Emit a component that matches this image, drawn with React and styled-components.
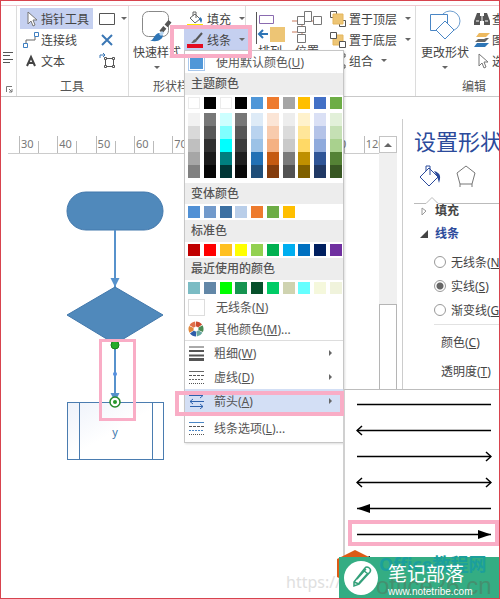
import React from "react";
import styled, { createGlobalStyle, css } from "styled-components";

const Global = createGlobalStyle`
  * { box-sizing: border-box; }
  body { margin: 0; background: #fff; }
  body, button, input { font-family: "Noto Sans", "Noto Sans CJK SC", sans-serif; font-size: 12px; color: #444; }
  button { border: 0; padding: 0; margin: 0; background: none; text-align: left; white-space: nowrap; }
  svg { display: block; flex: none; }
  u { text-underline-offset: 1px; }
`;

const BLUE = "#2b4a9b";
const PINK = "#f9adc6";

const Window = styled.main`
  position: relative;
  display: flex;
  flex-direction: column;
  min-height: 100vh;
  overflow: hidden;
  border: 1px solid #d8434e;
`;

/* Ribbon */
const Ribbon = styled.header`
  display: flex;
  height: 92px;
  margin-top: 4px;
  overflow: hidden;
  border-top: 1px solid #f1c9cf;
  border-bottom: 1px solid #c9c9c9;
`;
const Group = styled.section`
  display: flex;
  flex-direction: column;
  flex: none;
  width: ${(p) => p.$w}px;
  padding-top: 2px;
  border-right: 1px solid #dcdcdc;
`;
const GroupBody = styled.div`
  display: flex;
  height: 70px;
  padding-left: ${(p) => p.$pad || 0}px;
  gap: ${(p) => p.$gap || 0}px;
`;
const GroupLabel = styled.div`
  padding-left: ${(p) => p.$pad}px;
  line-height: 18px;
  white-space: nowrap;
  color: #555;
`;
const Column = styled.div`
  display: flex;
  flex-direction: column;
  flex: none;
`;
const Tool = styled.button`
  display: flex;
  align-items: center;
  gap: ${(p) => p.$gap || 2}px;
  height: 21px;
  padding: 0 4px 0 3px;
  ${(p) => p.$active && css`background: #c5d0f0;`}
`;
const BigTool = styled.button`
  display: flex;
  flex-direction: column;
  align-items: center;
  flex: none;
  width: ${(p) => p.$w}px;
  line-height: 18px;
  padding-top: 2px;
`;
const BigLabel = styled.span`
  margin-top: ${(p) => p.$gap}px;
`;
const Caret = styled.i`
  flex: none;
  margin: ${(p) => (p.$below ? "4px 0 0" : "0 0 0 5px")};
  border: 3px solid transparent;
  border-top-color: #666;
  border-bottom: 0;
`;
const Sliver = styled.div`
  display: flex;
  flex-direction: column;
  justify-content: space-between;
  flex: none;
  width: 16px;
  padding: 45px 3px 3px 2px;
  border-right: 1px solid #dcdcdc;
`;

/* Document area */
const Workspace = styled.div`
  display: flex;
  flex: 1;
  padding-top: 22px;
`;
const Canvas = styled.section`
  display: flex;
  flex-direction: column;
  flex: 1;
  min-width: 0;
  padding-top: 17px;
`;
const Ruler = styled.div`
  height: 18px;
  margin-left: 7px;
  padding-left: 11px;
  overflow: hidden;
  border-bottom: 1px solid #ccc;
`;
const Ticks = styled.div`
  display: grid;
  grid-template-columns: repeat(10, 1fr);
  width: 383px;
  height: 17px;
`;
const Tick = styled.span`
  padding-left: 1px;
  border-left: 1px solid #bbb;
  font-size: 11px;
  line-height: 15px;
  color: #777;
  background: linear-gradient(#bbb, #bbb) 18px 100% / 1px 12px no-repeat;
`;
const Scroll = styled.div`
  display: flex;
  flex-direction: column;
  flex: none;
  width: 18px;
  margin-top: 17px;
  margin-right: 5px;
  background: #f0f0f0;
`;
const ScrollButton = styled.button`
  display: grid;
  place-items: center;
  height: 17px;
  border: 1px solid #c4c4c4;
  background: #fff;
`;
const Up = styled.i`
  border: 4px solid transparent;
  border-bottom-color: #666;
  border-top: 0;
`;
const Thumb = styled.div`
  flex: 1;
  margin-top: 151px;
  border: 1px solid #b5b5b5;
  background: #fff;
`;

/* Format panel */
const Panel = styled.aside`
  flex: none;
  width: 97px;
  padding-left: 11px;
  overflow: hidden;
  white-space: nowrap;
  border-left: 1px solid #ccc;
`;
const PanelTitle = styled.h1`
  margin: 0;
  padding-top: 4px;
  font-size: 22px;
  line-height: 36px;
  font-weight: 400;
  color: ${BLUE};
`;
const PanelTabs = styled.div`
  display: flex;
  gap: 12px;
  height: 37px;
  padding: 5px 0 0 4px;
`;
const Section = styled.button`
  display: flex;
  align-items: center;
  gap: 7px;
  width: 100%;
  height: ${(p) => (p.$clipped ? 14 : 32)}px;
  padding-left: 6px;
  overflow: hidden;
  font-weight: 700;
  color: ${(p) => (p.$open ? BLUE : "#444")};
  line-height: 14px;
`;
const Options = styled.div`
  display: flex;
  flex-direction: column;
  margin: 0 0 2px 20px;
  padding-bottom: 2px;
  border-bottom: 1px solid #e2e2e2;
`;
const Option = styled.label`
  display: flex;
  align-items: center;
  gap: 5px;
  height: 24px;
`;
const Radio = styled.input`
  appearance: none;
  flex: none;
  width: 12px;
  height: 12px;
  margin: 0;
  border: 1px solid #999;
  border-radius: 50%;
  &:checked { background: radial-gradient(#666 0 3px, #fff 4px); }
`;
const Field = styled.div`
  padding: 2px 0 0 27px;
  line-height: 27px;
`;

/* Colour menu */
const Menu = styled.div`
  position: absolute;
  left: 183px;
  top: 49px;
  width: 160px;
  border: 1px solid #c6c6c6;
  background: #fff;
  box-shadow: 1px 1px 2px #0002;
`;
const MenuHead = styled.div`
  height: ${(p) => p.$h || 22}px;
  padding-left: 6px;
  line-height: 21px;
  font-weight: 500;
  color: #555;
  background: #ededed;
`;
const Item = styled.button`
  display: flex;
  align-items: center;
  gap: ${(p) => (p.$wide ? 11 : 9)}px;
  width: 100%;
  height: ${(p) => p.$h || 24}px;
  padding: 0 11px 0 3px;
  color: #555;
  background: ${(p) => (p.$active ? "#d3dff5" : "transparent")};
`;
const ItemText = styled.span`flex: 1;`;
const Right = styled.i`
  border: 3px solid transparent;
  border-left-color: #666;
  border-right: 0;
`;
const Rule = styled.hr`
  margin: 0;
  border: 0;
  border-top: 1px solid #ddd;
`;
const Swatches = styled.div`
  display: grid;
  grid-template-columns: repeat(10, 12px);
  justify-content: space-between;
  padding: 2px 1px 2px 3px;
`;
const Swatch = styled.button`
  height: 12px;
  background: ${(p) => p.$c};
  ${(p) => p.$c === "#ffffff" && css`border: 1px solid #ececec;`}
`;
const Shades = styled(Swatches)`
  padding-bottom: 5px;
`;
const Shade = styled(Swatch)`height: 13px;`;
const Chip = styled.span`
  flex: none;
  width: 17px;
  height: 17px;
  border: 1px solid ${(p) => (p.$c ? "#a9c8ec" : "#ddd")};
  background: ${(p) => p.$c || "#fff"};
  box-shadow: ${(p) => (p.$c ? "inset 0 0 0 1px #fff" : "none")};
`;

const ArrowMenu = styled.div`
  position: absolute;
  left: 342px;
  right: 0;
  top: 388px;
  bottom: 0;
  display: flex;
  flex-direction: column;
  padding: 1px 6px 0 11px;
  border-top: 1px solid #bdbdbd;
  border-left: 2px solid #d0d0d0;
  background: #fff;
`;
const ArrowItem = styled.button`
  height: 26px;
  flex: none;
`;

const Mark = styled.div`
  position: absolute;
  left: ${(p) => p.$x}px;
  top: ${(p) => p.$y}px;
  width: ${(p) => p.$w}px;
  height: ${(p) => p.$h}px;
  border: ${(p) => p.$b || 4}px solid ${PINK};
  pointer-events: none;
`;

/* Site badges */
const Url = styled.span`
  position: absolute;
  left: 285px;
  bottom: 5px;
  font-size: 16px;
  line-height: 22px;
  color: #e0e0e0;
`;
const Hexagon = styled.div`
  position: absolute;
  right: 126px;
  bottom: 12px;
`;
const Site = styled.div`
  position: absolute;
  right: 5px;
  bottom: 0;
  width: 118px;
  white-space: nowrap;
`;
const SiteName = styled.div`
  padding-left: 3px;
  font-size: 18px;
  font-weight: 700;
  line-height: 20px;
  color: #1b9f9c;
`;
const SiteUrl = styled.div`
  font-family: "Liberation Sans", sans-serif;
  font-size: 24px;
  line-height: 24px;
  color: #45906f;
`;
const Badge = styled.div`
  position: absolute;
  right: 0;
  bottom: 0;
  display: flex;
  align-items: center;
  gap: 10px;
  width: 160px;
  height: 41px;
  padding-left: 5px;
  background: #34ad83;
`;
const BadgeFront = styled(Badge)`
  background: none;
  color: #fff;
`;
const BadgeName = styled.div`
  padding-top: 4px;
  font-size: 19px;
  line-height: 24px;
`;
const BadgeUrl = styled.div`
  font-family: "Liberation Sans", sans-serif;
  font-size: 10px;
  line-height: 12px;
`;

const Icon = ({ w = 16, h = 16, children }) => (
  <svg width={w} height={h} viewBox={`0 0 ${w} ${h}`} fill="none" stroke="#555" aria-hidden="true">{children}</svg>
);
const Pointer = () => <Icon><path d="M5 1v12l3-3 2 5 2-1-2-5h4z" fill="#fff" stroke="#777" /></Icon>;
const Connector = () => <Icon><path d="M3 11V8h9V5" stroke="#666" /><path d="M.5 11.5h4v4h-4zM11.500.5h4v4h-4z" fill="#fff" stroke="#3f7fc1" /></Icon>;
const LetterA = () => <Icon><path d="M4 13 8 4l4 9M5.500 10h5" stroke="#444" strokeWidth="2" /></Icon>;
const Quick = () => (
  <Icon w={32} h={32}>
    <rect x="1.500" y="1.500" width="26" height="25" rx="6" stroke="#888" />
    <path d="m20 22 10-12" stroke="#555" strokeWidth="4" strokeDasharray="6 2" />
    <path d="M9 31c4-1 4-7 9-8 4 0 5 4 2 6-3 3-7 2-11 2z" fill="#2e75b6" stroke="none" />
    <path d="m19 25 3-3" stroke="#b5d3ee" strokeWidth="3" />
  </Icon>
);
const Bucket = () => (
  <Icon w={17}>
    <path d="m3 7 5-4 5 5-5 4zM6 5V1h3v6" fill="#fff" stroke="#666" />
    <path d="M13 6c3 2 2 4 1 6l-2-4z" fill="#2e75b6" stroke="none" />
    <path d="M0 13h16v3H0z" fill="#ffe800" stroke="none" />
  </Icon>
);
const Pen = () => (
  <Icon w={17}>
    <path d="m9 8 6-7" stroke="#555" strokeWidth="2" />
    <path d="M4 11c2-1 2-4 5-4 2 2 0 4-5 4z" fill="#666" stroke="none" />
    <path d="M0 12h16v4H0z" fill="#e40b21" stroke="none" />
  </Icon>
);
const Align = () => (
  <Icon w={30} h={34}>
    <path d="M1.500 2v32" stroke="#555" /><path d="M4.500 5.500h14v8h-14z" stroke="#8a6bb0" />
    <path d="M15 17h15v15H15z" fill="#edc575" stroke="none" />
    <path d="M4 24h9M8 20l-4 4 4 4" stroke="#2e75b6" strokeWidth="2" />
  </Icon>
);
const Position = () => (
  <Icon w={30} h={34}>
    <path d="M0 11h22M10 11v18M0 22h10" stroke="#c9785a" />
    <path d="M12.500 1.500h7v10h-7zM21.500 6.500h8v8h-8zM5.500 6.500h7v8h-7zM5.500 16.500h8v6h-8zM5.500 24.500h8v8h-8z" fill="#fff" stroke="#777" />
  </Icon>
);
const Front = () => <Icon><path d="M.5.5h6v6h-6zM9.500 9.500h6v6h-6z" /><path d="M3 3h10v10H3z" fill="#edc575" stroke="#e5b65c" /></Icon>;
const Back = () => <Icon><path d="M3 3h10v10H3z" fill="#edc575" stroke="#e5b65c" /><path d="M.5.5h6v6h-6zM9.500 9.500h6v6h-6z" fill="#fff" /></Icon>;
const GroupIcon = () => <Icon><path d="M2.500 2.500h11v11h-11z" /><path d="M1 1h3v3H1zM12 1h3v3h-3zM1 12h3v3H1zM12 12h3v3h-3z" fill="#fff" /></Icon>;
const Change = () => (
  <Icon w={32} h={30}>
    <circle cx="21" cy="11" r="10" stroke="#6f9fd0" />
    <path d="M1.500 4.500h17v16h-17z" fill="#fff" stroke="#4a86c5" />
    <path d="m16 11 9 9-9 9-9-9z" fill="#fff" stroke="#4a86c5" />
  </Icon>
);
const Binoculars = () => <Icon><path d="M3 2h3v3h4V2h3l3 8v4h-6v-4H6v4H0v-4z" fill="#555" stroke="none" /><path d="M8 5v5M2 10h3M11 10h3" stroke="#fff" /></Icon>;
const Layers = () => <Icon><path d="m5 1-3 4h10l4-4z" fill="#edb95f" stroke="none" /><path d="m4 7-3 3h10l4-4h-3l-2 1z" fill="#666" stroke="none" /><path d="m3 11-3 4h11l4-4z" fill="#2e75b6" stroke="none" /></Icon>;
const Wheel = () => (
  <Icon>
    <g strokeWidth="5" fill="none">
      {["#cc4b2f", "#4b8a55", "#67a7a0", "#2d5daa", "#e1883c", "#e0704b"].map((c, i) => (
        <circle key={c} cx="8" cy="8" r="5" stroke={c} strokeDasharray="4.500 40" transform={`rotate(${i * 60 - 90} 8 8)`} />
      ))}
    </g>
  </Icon>
);
const Weight = () => <Icon w={17}><path d="M1 2h15" /><path d="M1 6h15" strokeWidth="2" /><path d="M1 10.500h15" strokeWidth="2" /><path d="M1 14.500h15" strokeWidth="3" /></Icon>;
const Dashes = ({ blue }) => <Icon w={17}><path d="M1 2.500h15" stroke={blue ? "#4a86c5" : "#666"} /><path d="M1 6.500h15" strokeDasharray="3 1" /><path d="M1 10.500h15" stroke={blue ? "#4a86c5" : "#666"} strokeDasharray="2 1" /><path d="M1 14.500h15" strokeDasharray="1 1" /></Icon>;
const Arrows = () => <Icon w={17}><path d="M1 2.500h14M12 0l3 2.500L12 5M16 8.500H2M5 6 2 8.500 5 11M2 13.500h13M12 11l3 2.500-3 2.500" stroke="#2e62ad" /></Icon>;

const theme = ["#ffffff", "#000000", "#ffffff", "#000000", "#5097d8", "#ee7b2e", "#a5a5a5", "#ffbf00", "#4270c6", "#6dad46"];
const shades = [
  ["#f2f2f2", "#777777", "#ccffff", "#777777", "#deebf7", "#fbe5d6", "#ededed", "#fff2cc", "#dae0f5", "#e2f0d9"],
  ["#d9d9d9", "#575757", "#7fffff", "#575757", "#b9d3ef", "#f8cbad", "#dbdbdb", "#ffe699", "#b4c3e8", "#c5e0b4"],
  ["#bfbfbf", "#303030", "#00ffff", "#3c3c3c", "#9cc2e6", "#f4b183", "#c9c9c9", "#ffd966", "#8faadc", "#a9d18e"],
  ["#a6a6a6", "#1b1b1b", "#007f7f", "#202020", "#2371b5", "#c55a11", "#7b7b7b", "#bf9000", "#2f5597", "#548235"],
  ["#808080", "#050505", "#003636", "#080808", "#1f4e79", "#843c0c", "#525252", "#7f6000", "#203864", "#385723"],
];
const variants = ["#5090d5", "#729acb", "#3c70a2", "#b9cee9", "#ee7b2e", "#6dad46", "#ffbf00"];
const standard = ["#c00000", "#ff0000", "#ffc020", "#ffff00", "#92d050", "#00b050", "#00aef0", "#0070c0", "#002060", "#7030a0"];
const recent = ["#7bbcc4", "#6287a7", "#00ff00", "#169450", "#06502b", "#00cc66", "#cfd3b0", "#66ffff", "#f5f8dc", "#f0f3dc"];

const Palette = ({ colors }) => (
  <Swatches>{colors.map((c, i) => <Swatch key={i} $c={c} aria-label={c} />)}</Swatches>
);
const DownTool = ({ icon, children, active, gap, label }) => (
  <Tool $active={active} $gap={gap} aria-label={label}>{icon}{children}<Caret /></Tool>
);

const arrowKinds = [["", ""], ["open", ""], ["", "open"], ["open", "open"], ["solid", ""], ["", "solid"], ["solid", "solid"]];
const ArrowLine = ({ start, end }) => (
  <svg width="136" height="12" viewBox="0 0 136 12" fill="none" stroke="#000" strokeWidth="1.500" aria-hidden="true">
    <path d="M1 6.500h134" />
    {start === "open" && <path d="m6 2-5 4.500L6 11" />}
    {end === "open" && <path d="m130 2 5 4.500-5 4.500" />}
    {start === "solid" && <path d="M1 6.500 14 2v9z" fill="#000" stroke="none" />}
    {end === "solid" && <path d="M135 6.500 122 2v9z" fill="#000" stroke="none" />}
  </svg>
);

const Flowchart = () => (
  <svg width="180" height="310" viewBox="0 -1 180 310" fill="none" aria-label="流程图">
    <defs><linearGradient id="box" x1="0" y1="0" x2="1" y2="1"><stop stopColor="#eef2fa" /><stop offset=".5" stopColor="#fff" /></linearGradient></defs>
    <rect x="66" y="37" width="96" height="38" rx="19" fill="#5089bb" stroke="#4278ac" />
    <path d="M114 75v58" stroke="#5792cc" strokeWidth="2" /><path d="M109.500 123h9l-4.500 9z" fill="#5792cc" />
    <path d="m114 132 48 28-48 29-48-29z" fill="#5089bb" stroke="#4278ac" />
    <rect x="66.500" y="247.500" width="96" height="57" fill="url(#box)" stroke="#4a7cb0" />
    <path d="M78.500 248v57M151.500 248v57" stroke="#4a7cb0" />
    <path d="M114 192v48" stroke="#5792cc" strokeWidth="2" /><circle cx="114" cy="219" r="2" fill="#5590df" />
    <path d="M109.500 238h9l-4.500 9z" fill="#5792cc" />
    <circle cx="114" cy="190" r="4" fill="#25ab28" stroke="#188018" />
    <circle cx="114" cy="247" r="5" fill="#fff" stroke="#258a2a" strokeWidth="1.500" /><circle cx="114" cy="247" r="2" fill="#25992a" />
    <text x="114" y="281" fontSize="11" textAnchor="middle" fill="#4278ac">y</text>
  </svg>
);

export default function App() {
  return (
    <Window>
      <Global />
      <Ribbon>
        <Sliver>
          <Icon w={10} h={12}><path d="M0 1.500h10M0 4.500h7M0 8.500h10M0 11.500h7" /></Icon>
          <Icon w={10} h={8}><path d="M3.500 7V1.500H9M6 4l3 3M9 4v3H6" stroke="#777" /></Icon>
        </Sliver>
        <Group $w={112}>
          <GroupBody $pad={3} $gap={3}>
            <Column>
              <Tool $active><Pointer />指针工具</Tool>
              <Tool><Connector />连接线</Tool>
              <Tool><LetterA />文本</Tool>
            </Column>
            <Column>
              <DownTool gap={1} label="矩形" icon={<Icon><path d="M.5 2.500h15v11H.5z" /></Icon>} />
              <Tool aria-label="删除"><Icon><path d="m3 3 10 10M13 3 3 13" stroke="#3b77b5" strokeWidth="2" /></Icon></Tool>
              <Tool aria-label="连接点"><Icon><path d="M1 5V2h5M4 0l2 2-2 2" stroke="#3b77b5" /><path d="M6.500 5.500h8v8h-8z" /><path d="M5.500 4.500h2v2h-2zM13.500 4.500h2v2h-2zM5.500 12.500h2v2h-2zM13.500 12.500h2v2h-2z" fill="#fff" /></Icon></Tool>
            </Column>
          </GroupBody>
          <GroupLabel $pad={43}>工具</GroupLabel>
        </Group>
        <Group $w={117}>
          <GroupBody $pad={1}>
            <BigTool $w={54}><Quick /><BigLabel $gap={2}>快速样式</BigLabel><Caret $below /></BigTool>
            <Column>
              <DownTool gap={3} icon={<Bucket />}>填充</DownTool>
              <DownTool gap={3} active icon={<Pen />}>线条</DownTool>
            </Column>
          </GroupBody>
          <GroupLabel $pad={24}>形状样式</GroupLabel>
        </Group>
        <Group $w={170}>
          <GroupBody $pad={7}>
            <BigTool $w={34}><Align /><BigLabel $gap={-1}>排列</BigLabel></BigTool>
            <BigTool $w={40}><Position /><BigLabel $gap={-1}>位置</BigLabel></BigTool>
            <Column>
              <DownTool gap={3} icon={<Front />}>置于顶层</DownTool>
              <DownTool gap={3} icon={<Back />}>置于底层</DownTool>
              <DownTool gap={3} icon={<GroupIcon />}>组合</DownTool>
            </Column>
          </GroupBody>
        </Group>
        <Group $w={110}>
          <GroupBody $pad={3}>
            <BigTool $w={52}><Change /><BigLabel $gap={4}>更改形状</BigLabel><Caret $below /></BigTool>
            <Column>
              <Tool><Binoculars />查找</Tool>
              <Tool><Layers />图层</Tool>
              <Tool><Pointer />选择</Tool>
            </Column>
          </GroupBody>
          <GroupLabel $pad={46}>编辑</GroupLabel>
        </Group>
      </Ribbon>

      <Workspace>
        <Canvas>
          <Ruler>
            <Ticks>{[30, 40, 50, 60, 70, 80, 90, 100, 110, 120].map((n) => <Tick key={n}>{n}</Tick>)}</Ticks>
          </Ruler>
          <Flowchart />
        </Canvas>
        <Scroll>
          <ScrollButton aria-label="向上滚动"><Up /></ScrollButton>
          <Thumb />
        </Scroll>
        <Panel>
          <PanelTitle>设置形状格式</PanelTitle>
          <PanelTabs>
            <Icon w={24} h={24}><path d="m2 13 9-9 9 9-9 9zM8 7V2h4v9" stroke={BLUE} /><path d="M16 7c7 2 7 6 5 12l-2-7z" fill={BLUE} stroke="none" /></Icon>
            <Icon w={24} h={24}><path d="m12 2 9 7-3 11H6L3 9zM6 20v3M18 20v3" stroke="#777" /></Icon>
          </PanelTabs>
          <svg width="100%" height="8" viewBox="0 0 86 8" preserveAspectRatio="xMinYMin slice" fill="none" stroke="#bbb"><path d="M0 7.500h12l6-6 6 6h62" /></svg>
          <Section $clipped><Icon w={8} h={10}><path d="m2 2 4 3-4 4z" stroke="#999" /></Icon>填充</Section>
          <Section $open><Icon w={8} h={8}><path d="M8 0v8H0z" fill="#444" stroke="none" /></Icon>线条</Section>
          <Options>
            <Option><Radio type="radio" name="line" /><span>无线条(<u>N</u>)</span></Option>
            <Option><Radio type="radio" name="line" defaultChecked /><span>实线(<u>S</u>)</span></Option>
            <Option><Radio type="radio" name="line" /><span>渐变线(<u>G</u>)</span></Option>
          </Options>
          <Field>颜色(<u>C</u>)</Field>
          <Field>透明度(<u>T</u>)</Field>
        </Panel>
      </Workspace>

      <Menu>
        <Item $h={22} $wide><Chip $c="#5097d8" /><ItemText>使用默认颜色(<u>U</u>)</ItemText></Item>
        <MenuHead>主题颜色</MenuHead>
        <Palette colors={theme} />
        <Shades>{shades.flat().map((c, i) => <Shade key={i} $c={c} aria-label={c} />)}</Shades>
        <MenuHead $h={21}>变体颜色</MenuHead>
        <Palette colors={variants} />
        <MenuHead>标准色</MenuHead>
        <Palette colors={standard} />
        <MenuHead>最近使用的颜色</MenuHead>
        <Palette colors={recent} />
        <Item $h={22} $wide><Chip /><ItemText>无线条(<u>N</u>)</ItemText></Item>
        <Item $h={22} $wide><Wheel /><ItemText>其他颜色(<u>M</u>)...</ItemText></Item>
        <Rule />
        <Item><Weight /><ItemText>粗细(<u>W</u>)</ItemText><Right /></Item>
        <Item><Dashes /><ItemText>虚线(<u>D</u>)</ItemText><Right /></Item>
        <Item $active><Arrows /><ItemText>箭头(<u>A</u>)</ItemText><Right /></Item>
        <Rule />
        <Item $h={28}><Dashes blue /><ItemText>线条选项(<u>L</u>)...</ItemText></Item>
      </Menu>

      <ArrowMenu>
        {arrowKinds.map(([s, e], i) => <ArrowItem key={i} aria-label="箭头样式"><ArrowLine start={s} end={e} /></ArrowItem>)}
      </ArrowMenu>

      <Mark $x={169} $y={24} $w={82} $h={33} />
      <Mark $x={98} $y={338} $w={37} $h={82} $b={3} />
      <Mark $x={174} $y={390} $w={169} $h={25} />
      <Mark $x={347} $y={519} $w={151} $h={26} />

      <Url>https://b</Url>
      <Hexagon><svg width="36" height="36" viewBox="0 0 36 36"><path d="m18 0 18 9v18l-18 9-18-9V9z" fill="#dc5b16" /></svg></Hexagon>
      <Badge />
      <Site>
        <SiteName>Office教程网</SiteName>
        <SiteUrl>office26.cn</SiteUrl>
      </Site>
      <BadgeFront>
        <svg width="34" height="34" viewBox="0 0 34 34" fill="none" stroke="#34a07a" strokeWidth="1.500">
          <circle cx="17" cy="17" r="17" fill="#fff" stroke="none" />
          <path d="m12 23 11-14c2-3 7 1 5 4L17 25l-5 2zM21 11l5 4M15 20l9-10M17 24l9-10M12 23l5 2" transform="translate(-2 -2)" />
        </svg>
        <div>
          <BadgeName>笔记部落</BadgeName>
          <BadgeUrl>www.notetribe.com</BadgeUrl>
        </div>
      </BadgeFront>
    </Window>
  );
}
